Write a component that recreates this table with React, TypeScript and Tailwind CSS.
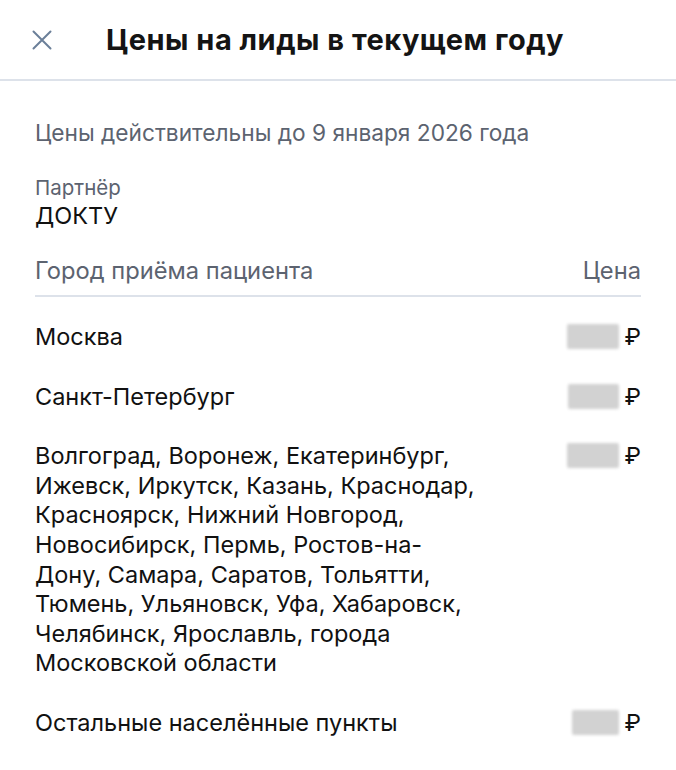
import React from "react";

const rows = [
  { city: "Москва", w: 52 },
  { city: "Санкт-Петербург", w: 51 },
  {
    city:
      "Волгоград, Воронеж, Екатеринбург, Ижевск, Иркутск, Казань, Краснодар, Красноярск, Нижний Новгород, Новосибирск, Пермь, Ростов-на-Дону, Самара, Саратов, Тольятти, Тюмень, Ульяновск, Уфа, Хабаровск, Челябинск, Ярославль, города Московской области",
    w: 52,
  },
  { city: "Остальные населённые пункты", w: 47 },
];

function Price({ w }: { w: number }) {
  return (
    <div className="flex items-center gap-[6px] shrink-0 h-[29.6px]">
      <div className="h-[25px] bg-[#d2d2d2] blur-[1.5px] rounded-[2px]" style={{ width: w }} />
      <span className="text-[23.5px] leading-[29.6px] text-[#111]">₽</span>
    </div>
  );
}

export default function App() {
  return (
    <div className="w-[676px] h-[770px] bg-white text-[#111] font-['Inter','Noto_Sans',sans-serif] overflow-hidden">
      <div className="h-[81px] flex items-center border-b-2 border-[#dde2ea]">
        <svg className="ml-[32px] w-[20px] h-[20px]" viewBox="0 0 20 20" fill="none" stroke="#6b7f99" strokeWidth="2" strokeLinecap="round">
          <path d="M1.5 1.5 L18.5 18.5 M18.5 1.5 L1.5 18.5" />
        </svg>
        <h1 className="ml-[54px] text-[29px] leading-[34px] font-bold tracking-[0.5px] text-[#141414]">Цены на лиды в текущем году</h1>
      </div>
      <div className="px-[35px]">
        <p className="mt-[37px] text-[22.7px] leading-[30px] text-[#5c6370]">Цены действительны до 9 января 2026 года</p>
        <p className="mt-[27px] text-[20.5px] leading-[26px] text-[#5c6370]">Партнёр</p>
        <p className="text-[23.5px] leading-[30px]">ДОКТУ</p>
        <div className="mt-[25px] flex justify-between text-[23.7px] leading-[30px] text-[#5c6370] pb-[9px] border-b-2 border-[#dde2ea]">
          <span>Город приёма пациента</span>
          <span>Цена</span>
        </div>
        <div className="mt-[25px] flex flex-col gap-[30px]">
          {rows.map((r, i) => (
            <div key={i} className="flex justify-between items-start">
              <p className="w-[445px] text-[23.5px] leading-[29.6px]">{r.city}</p>
              <Price w={r.w} />
            </div>
          ))}
        </div>
      </div>
    </div>
  );
}
